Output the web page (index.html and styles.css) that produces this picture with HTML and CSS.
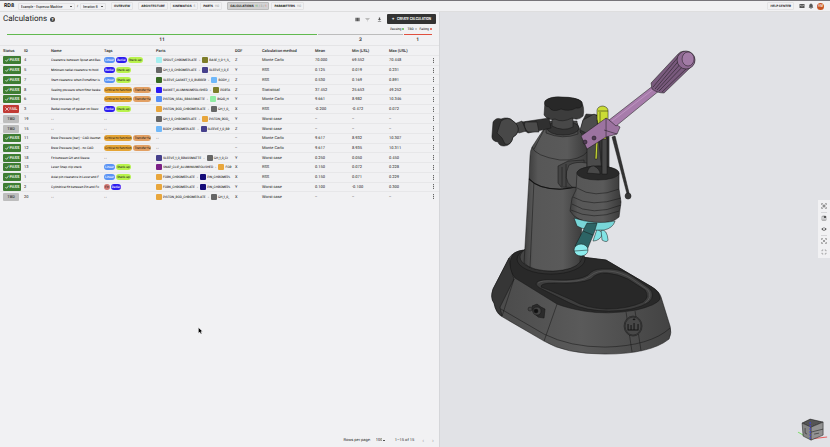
FILE: index.html
```html
<!DOCTYPE html>
<html lang="en">
<head>
  <meta charset="UTF-8">
  <meta name="viewport" content="width=device-width, initial-scale=1.0">
  <title>Calculations - Espresso Machine</title>
  <link rel="stylesheet" href="styles.css">
</head>
<body>
  <header class="topbar">
    <a href="#" class="logo">RD8</a>
    <select class="select project" aria-label="Project"><option>Example - Espresso Machine</option></select>
    <span class="slash">/</span>
    <select class="select iteration" aria-label="Iteration"><option>Iteration 6</option></select>
    <nav class="nav">
      <a href="#" class="first">OVERVIEW</a>
      <a href="#" class="first">ARCHITECTURE</a>
      <a href="#">KINEMATICS <small>5</small></a>
      <a href="#">PARTS <small>110</small></a>
      <a href="#" class="first active">CALCULATIONS <small><i class="ok">11</i> / <i>3</i> / <i class="bad">1</i></small></a>
      <a href="#">PARAMETERS <small>110</small></a>
    </nav>
    <div class="tools">
      <a href="#" class="help">HELP CENTER</a>
      <button class="icon" aria-label="Messages"><svg viewBox="0 0 24 24"><path d="M2 4h20v16H2zM4 7v2l8 5 8-5V7l-8 5z" fill-rule="evenodd"/></svg></button>
      <button class="icon" aria-label="Notifications"><svg viewBox="0 0 24 24"><path d="M12 23a3 3 0 0 0 3-3H9a3 3 0 0 0 3 3zm7-7v-5c0-4-2-6-5-7V2h-4v2c-3 1-5 3-5 7v5l-2 2v1h18v-1z"/></svg></button>
      <button class="avatar" aria-label="Account">AM</button>
    </div>
  </header>

  <main class="split">
    <section class="panel">
      <div class="heading">
        <h1>Calculations</h1>
        <button class="question" aria-label="Help">?</button>
        <div class="actions">
          <button class="icon" aria-label="Columns"><svg viewBox="0 0 24 24"><path d="M2 4h6v16H2zM9 4h6v16H9zM16 4h6v16h-6z"/></svg></button>
          <button class="icon light" aria-label="Filter"><svg viewBox="0 0 24 24"><path d="M2 5h20v3H2zM6 11h12v3H6zM10 17h4v3h-4z"/></svg></button>
          <button class="icon sep" aria-label="Download"><svg viewBox="0 0 24 24"><path d="M9 2h6v7h5l-8 8-8-8h5zM4 19h16v3H4z"/></svg></button>
          <button class="create"><b>+</b> CREATE CALCULATION</button>
        </div>
      </div>

      <div class="legend">
        <span class="pass">Passing</span><span class="tbd">TBD</span><span class="fail">Failing</span>
      </div>
      <div class="summary">
        <div class="pass">11</div>
        <div class="tbd">3</div>
        <div class="fail">1</div>
      </div>

      <table>
        <colgroup>
          <col class="c-status"><col class="c-id"><col class="c-name"><col class="c-tags"><col class="c-parts"><col class="c-id">
          <col class="c-method"><col class="c-num"><col class="c-num"><col><col class="c-menu">
        </colgroup>
        <thead>
          <tr><th>Status</th><th>ID</th><th>Name</th><th>Tags</th><th>Parts</th><th>DOF</th><th>Calculation method</th><th>Mean</th><th>Min (LSL)</th><th>Max (USL)</th><th></th></tr>
        </thead>
        <tbody id="rows"></tbody>
      </table>

      <footer class="pager">
        <label for="perPage">Rows per page:</label>
        <select id="perPage" class="select"><option>100</option></select>
        <span class="range">1–15 of 15</span>
        <button aria-label="Previous page">‹</button>
        <button aria-label="Next page">›</button>
      </footer>

      <svg class="cursor" viewBox="0 0 12 18"><path d="M1 1v14l3-3 3 5 2-1-2-5h4z"/></svg>
    </section>

    <section class="viewer">
      <svg class="scene" viewBox="440 12 390 435">
        <defs>
          <linearGradient id="body">
            <stop offset="0" stop-color="#3f3f3f"/><stop offset=".15" stop-color="#575757"/>
            <stop offset=".65" stop-color="#5a5a5a"/><stop offset="1" stop-color="#3a3a3a"/>
          </linearGradient>
          <linearGradient id="side">
            <stop offset="0" stop-color="#4a4a4a"/><stop offset=".5" stop-color="#5a5a5a"/><stop offset="1" stop-color="#434343"/>
          </linearGradient>
        </defs>

        <g class="line">
          <!-- base -->
          <path fill="url(#side)" d="M513 254Q518 250 526 250L606 260L652 287Q659 291 661 297L670 326Q672 333 669 339Q650 354 605 354Q565 354 544 341L501 316Q496 313 494 303Q490 298 493 289L509 258Q511 255 513 254Z"/>
          <path fill="#292929" d="M513 254Q518 250 526 250L606 260L652 287Q660 292 660 299Q657 305 636 310Q607 315 584 311Q567 308 557 304L515 278Q507 268 511 258Z"/>
          <path fill="#363636" d="M509 258Q510 270 514 279L500 307L502 316Q496 313 494 303Q490 298 493 289Z"/>
          <path fill="none" d="M557 304L544 341M501 309L544 334Q570 347 605 347Q650 346 670 328M626 312L632 352M635 311L641 351M514 279L502 316"/>
          <path fill="#3d3d3d" d="M536 284Q536 279 552 280Q579 281 588 275Q593 269 601 269H612Q623 270 632 276L649 288Q656 295 649 302Q635 311 609 311Q586 311 570 303L542 289Q537 287 536 284Z"/>
          <path fill="#282828" d="M541 287Q540 283 554 283Q580 284 591 279Q597 272 607 273Q618 274 628 279L645 290Q650 297 643 302Q628 309 606 309Q585 308 572 300L549 290Z"/>
          <path fill="none" stroke="#666" d="M538 283Q541 280 554 281Q582 283 590 276Q597 270 609 271Q622 272 632 279L648 290Q653 297 645 303"/>
          <ellipse cx="551" cy="259" rx="34" ry="15" fill="#303030"/>
          <ellipse cx="551" cy="257" rx="31" ry="14" fill="#454545"/>

          <!-- knob and badge on the base -->
          <path fill="#2b2b2b" d="M532 306l5-2 4 3 4 2-1 9-6-1-5-5z"/>
          <circle cx="537" cy="311" r="4" fill="#444"/><circle cx="536" cy="311" r="2" fill="#111"/><circle cx="530" cy="309" r="2" fill="#444"/>
          <ellipse cx="633" cy="326" rx="9" ry="10" fill="#484848"/>
          <ellipse cx="633" cy="326" rx="8" ry="9" fill="none"/>
          <path class="thick" fill="none" d="M628 324v6h10v-6M631 325v5M634 323v7M638 325v5M633 320q1-2 2 0"/>

          <!-- boiler column -->
          <path fill="url(#body)" d="M529 178L524 263Q532 271 553 271Q574 270 580 262L584 178Z"/>
          <path fill="none" d="M534 180L530 267"/>
          <path fill="url(#body)" d="M547 124L532 147Q530 151 530 156L529 178Q536 189 560 189Q584 187 588 176L588 148L577 123Z"/>
          <path class="thick" fill="none" d="M529 179Q540 190 563 189Q580 187 586 181"/>
          <path fill="none" d="M532 147Q535 156 560 160Q580 161 588 151M545 128L534 149"/>
          <path fill="#4a4a4a" d="M546 127Q544 122 551 121H577L578 134Q563 140 546 133Z"/>
          <ellipse cx="563" cy="128" rx="16" ry="7" fill="#343434"/>
          <path fill="#484848" d="M552 114V126Q563 132 573 127V114Z"/>
          <path fill="#3c3c3c" d="M545 101Q550 97 562 98Q576 97 581 101Q585 108 583 116Q578 121 572 118Q562 123 555 119Q548 121 544 115Z"/>
          <path fill="#282828" d="M545 101Q550 96 562 97Q576 97 582 102Q583 109 576 108Q569 112 561 109Q552 113 549 107Q543 106 545 101Z"/>

          <!-- steam knob -->
          <path fill="#303030" d="M522 122L549 118L551 128L528 133Q521 129 522 122Z"/>
          <path fill="#4b4b4b" d="M525 122h12l2 10h-11q-5-5-3-10z"/>
          <path fill="#444" d="M514 124l8-3 4 10-7 2-5-3z"/>
          <path fill="#303030" d="M493 122Q496 117 501 119Q508 116 513 121Q519 125 518 131Q517 135 513 137Q511 146 504 146Q499 146 498 142Q491 141 492 135Z"/>
          <path fill="#484848" d="M501 121Q508 116 513 121Q519 125 518 131Q517 135 513 137Q511 146 505 144L502 138L497 133Z"/>

          <!-- side pipe -->
          <path fill="#333" d="M583 120L586 114L598 115L603 141L593 146L580 132Z"/>
          <path fill="#4c4c4c" d="M583 120L594 114L604 120L597 138L580 130Z"/>
          <path fill="#444" d="M558 166L568 161L584 160V188L561 187L558 183Z"/>
          <path fill="#545454" d="M569 165Q576 161 587 163V188L572 187Q562 179 569 165Z"/>
          <path fill="none" d="M562 167v19M566 164v23"/>

          <!-- piston housing -->
          <path fill="#4b4b4b" d="M587 139L607 134V173H587Z"/>
          <path fill="#353535" d="M597 120L609 137V174H602Z"/>
          <path fill="#5c5c5c" d="M603 137H607V175H601Z"/>
          <path fill="#333" d="M612 137L615 136L629 193L627 194Z"/>
          <circle cx="628" cy="196" r="3" fill="#383838"/>
          <path fill="url(#body)" d="M577 172Q582 166 599 166Q614 166 619 173L619 189L621 202L619 217Q613 223 598 223Q576 222 570 211L572 198L576 190Z"/>
          <ellipse cx="598" cy="173" rx="21" ry="7" fill="#292929"/>
          <path fill="#484848" d="M587 173Q589 165 594 166Q600 169 600 174ZM602 138h5v36h-5z"/>
          <path fill="none" d="M577 188Q594 199 619 189M573 197Q591 208 621 198M572 204Q592 217 621 205M571 210Q593 221 619 211"/>

          <!-- portafilter -->
          <path fill="#83e4e5" d="M597 229L603 233Q600 241 593 241Z"/>
          <path fill="#83e4e5" d="M601 230Q607 229 608 240Q607 243 602 240Z"/>
          <path fill="#78d6d8" d="M574 218Q595 225 615 221Q613 228 604 230Q585 231 577 226Z"/>
          <path fill="#2d6465" d="M587 223L597 223L594 233L587 250L575 246Z"/>
          <ellipse cx="581" cy="250" rx="7" ry="6" fill="#8ceced"/>
          <path fill="none" d="M574 251L588 250M583 231l10 4"/>

          <!-- indicator -->
          <path fill="#cbdc36" d="M597 110Q598 106 603 106Q608 107 608 111V119L606 139H601L597 119Z"/>
          <path fill="#cbdc36" d="M596 139h2l-1 20h-2z"/>
          <path fill="none" d="M598 111h10M600 112v26"/>

          <!-- lever -->
          <path fill="#9c73a0" d="M581 136L606 118L620 127L617 134L606 137L587 149Z"/>
          <path fill="#a77cab" d="M609 120L654 85L660 90L616 126Z"/>
          <path fill="none" stroke="#d0abd3" d="M612 121L655 88"/>
          <path fill="#795a7d" d="M651 83L678 54Q682 49 691 53Q697 59 693 65L664 93Q657 93 652 89Z"/>
          <path fill="none" d="M653 87L679 56M655 89L681 58M657 90L683 61M659 91L686 63M662 92L690 65"/>
          <ellipse cx="686" cy="60" rx="9" ry="9" fill="#8e6992"/>
          <ellipse cx="688" cy="59" rx="6" ry="7" fill="#a27ba6"/>
          <circle cx="585" cy="142" r="2" fill="#503c54"/><circle cx="594" cy="138" r="2" fill="#503c54"/>
          <path fill="none" d="M606 118L606 137M604 130L617 134"/>
        </g>

        <!-- orientation cube -->
        <path stroke="#7bdc65" d="M798 432l12 7"/><path stroke="#e46060" d="M810 439l17-2"/>
        <g class="line">
          <path fill="#555" d="M802 423l8-4 13 3-12 5z"/>
          <path fill="#858585" d="M802 423l9 4v13l-8-4z"/>
          <path fill="#929292" d="M811 427l12-5v13l-12 5z"/>
          <path fill="none" d="M805 428v5l2 1M811 432l12-3M814 434l5-1"/>
        </g>
        <path stroke="#4040e0" stroke-dasharray="2 1" d="M810 422v17"/>
      </svg>

      <div class="view-tools">
        <button class="icon" aria-label="Fit all"><svg viewBox="0 0 24 24"><path class="stroke" d="M2 8V2h6M16 2h6v6M22 16v6h-6M8 22H2v-6M6 6l12 12M18 6L6 18M8 8h8v8H8z"/></svg></button>
        <button class="icon line-above" aria-label="Section"><svg viewBox="0 0 24 24"><path class="stroke" d="M4 5h16v16H4zM12 2v20"/><path d="M12 4h8v8h-8z"/></svg></button>
        <button class="icon" aria-label="Visibility"><svg viewBox="0 0 24 24"><path fill-rule="evenodd" d="M1 12Q12-1 23 12 12 25 1 12zm11-4a4 4 0 1 0 0 8 4 4 0 0 0 0-8z"/></svg></button>
        <button class="icon line-above" aria-label="Focus"><svg viewBox="0 0 24 24"><path class="stroke" d="M2 8V2h6M16 2h6v6M22 16v6h-6M8 22H2v-6M6 6l4 4M18 6l-4 4M6 18l4-4M18 18l-4-4"/><circle cx="12" cy="12" r="3"/></svg></button>
        <button class="icon" aria-label="Full screen"><svg viewBox="0 0 24 24"><path class="stroke" d="M4 9V4h5M15 4h5v5M20 15v5h-5M9 20H4v-5"/></svg></button>
      </div>
    </section>
  </main>

  <script>
    const tagClass = {
      'Linear': 'linear', 'Radial': 'radial', 'Stack-up': 'stack',
      'Critical to function': 'critical', 'Transfer fu': 'transfer', 'Fit': 'fit'
    };

    // status, id, name, tags, parts, dof, method, mean, min, max
    const data = [
      ['PASS', 4, 'Clearance between Spout and Bas', ['Linear', 'Radial', 'Stack-up'], [['#a5eff0', 'SPOUT_CHROMEPLATE'], ['#7d7d29', 'BASE_1_0-1_S_']], 'Z', 'Monte Carlo', '70.000', '69.552', '70.448'],
      ['PASS', 5, 'Minimum radial clearance to hold', ['Radial', 'Stack-up'], [['#666666', 'GH_1_0_CHROMEPLATE'], ['#46408c', 'SLEEVE_1_0_E']], 'Y', 'RSS', '0.125', '0.019', '0.231'],
      ['PASS', 7, 'Start clearance when Portafilter is', ['Linear', 'Stack-up'], [['#376a23', 'SLEEVE_GASKET_1_0_RUBBER'], ['#70b8fa', 'BODY_(']], 'Z', 'RSS', '0.530', '0.169', '0.891'],
      ['PASS', 8, 'Sealing pressure when filter baske', ['Critical to function', 'Transfer fu'], [['#2a18f5', 'BASKET_ALUMINUMPOLISHED'], ['#7d7d29', 'PORTA']], 'Z', 'Statistical', '37.452', '25.653', '49.252'],
      ['PASS', 6, 'Brew pressure [bar]', ['Critical to function', 'Transfer fu'], [['#568ff7', 'PISTON_SEAL_BRASSMATTE'], ['#91eda4', 'RIGID_H']], 'Y', 'Monte Carlo', '9.661', '8.982', '10.346'],
      ['FAIL', 3, 'Radial overlap of gasket on Sleev', ['Radial', 'Stack-up'], [['#e8a63c', 'PISTON_ROD_CHROMEPLATE'], ['#666666', 'GH_1_0_']], 'X', 'RSS', '-0.200', '-0.472', '0.072'],
      ['TBD', 19, '--', [], [['#666666', 'GH_1_0_CHROMEPLATE'], ['#e8a63c', 'PISTON_ROD_']], 'Y', 'Worst case', '--', '--', '--'],
      ['TBD', 15, '--', [], [['#70b8fa', 'BODY_CHROMEPLATE'], ['#46408c', 'SLEEVE_1_0_BR']], 'Z', 'Worst case', '--', '--', '--'],
      ['PASS', 11, 'Brew Pressure [bar] - CAD illustrat', ['Critical to function', 'Transfer fu'], [], '--', 'Monte Carlo', '9.617', '8.932', '10.307'],
      ['PASS', 12, 'Brew Pressure [bar] - no CAD', ['Critical to function', 'Transfer fu'], [], '--', 'Monte Carlo', '9.617', '8.935', '10.311'],
      ['PASS', 18, 'Fit between GH and Sleeve', [], [['#46408c', 'SLEEVE_1_0_BRASSMATTE'], ['#666666', 'GH_1_0_CI']], 'Y', 'Worst case', '0.250', '0.050', '0.450'],
      ['PASS', 13, 'Lever Snap clip stack', ['Linear', 'Stack-up'], [['#7b2087', 'SNAP_CLIP_ALUMINIUMPOLISHED'], ['#e8a63c', 'FOR']], 'X', 'RSS', '0.150', '0.072', '0.228'],
      ['PASS', 1, 'Axial pin clearance in Lever and F', ['Linear', 'Stack-up'], [['#e8a63c', 'FORK_CHROMEPLATE'], ['#150c78', 'PIN_CHROMEPL']], 'X', 'RSS', '0.150', '0.071', '0.229'],
      ['PASS', 2, 'Cylindrical fit between Pin and Fo', ['Fit', 'Radial'], [['#e8a63c', 'FORK_CHROMEPLATE'], ['#150c78', 'PIN_CHROMEPL']], 'Y', 'Worst case', '0.100', '-0.100', '0.300'],
      ['TBD', 20, '--', [], [['#e8a63c', 'PISTON_ROD_CHROMEPLATE'], ['#666666', 'GH_1_0_']], 'X', 'Worst case', '--', '--', '--']
    ];

    const marks = {
      PASS: '<svg viewBox="0 0 12 12"><path d="M1 6l4 4 6-8"/></svg>',
      FAIL: '<svg viewBox="0 0 12 12"><path d="M1 1l10 10M11 1L1 11"/></svg>',
      TBD: ''
    };

    document.getElementById('rows').innerHTML = data.map(([status, id, name, tags, parts, ...rest]) => {
      const chips = tags.map(t => `<span class="tag ${tagClass[t]}">${t}</span>`).join('') || '--';
      const list = parts.map(([color, part]) => `<i style="background:${color}"></i>${part}`).join('<em>-</em>') || '--';
      return `<tr>
        <td><span class="status ${status.toLowerCase()}">${marks[status]}${status}</span></td>
        <td>${id}</td><td><div class="clip">${name}</div></td>
        <td><div class="clip tags">${chips}</div></td>
        <td><div class="clip parts">${list}</div></td>
        ${rest.map(v => `<td>${v}</td>`).join('')}
        <td><button class="more" aria-label="More"></button></td>
      </tr>`;
    }).join('');
  </script>
</body>
</html>
```
FILE: styles.css
```css
* {
  box-sizing: border-box;
}

body {
  margin: 0;
  min-height: 100vh;
  display: flex;
  flex-direction: column;
  background: #f1f1f3;
  border-top: 1px solid #77757a;
  color: #222;
  font-family: Roboto, sans-serif;
  font-size: 4px;
  line-height: 6px;
  text-rendering: geometricPrecision;
}

a {
  color: inherit;
  text-decoration: none;
}

button,
select {
  font: inherit;
  color: inherit;
  margin: 0;
  padding: 0;
  border: 0;
  background: none;
}

i,
em {
  font-style: normal;
}

svg {
  display: block;
}

.icon {
  width: 6px;
  height: 6px;
}

.icon svg {
  width: 100%;
  fill: #555;
}

.icon .stroke {
  fill: none;
  stroke: #666;
  stroke-width: 2;
}

/* small print */
.topbar,
.create,
.legend,
.clip {
  font-family: Inter, sans-serif;
  font-size: 3px;
  font-weight: 500;
  color: #111;
}

/* top bar */
.topbar {
  display: flex;
  align-items: center;
  height: 11px;
  padding: 0 6px 0 4px;
  border-bottom: 1px solid #dededf;
}

.logo {
  width: 14px;
  font-size: 5px;
  font-weight: bold;
}

.select {
  appearance: none;
  height: 7px;
  padding: 0 5px 0 2px;
  border-radius: 1px;
  background: linear-gradient(#555, #555) no-repeat right 2px center / 2px 1px;
}

.project,
.iteration {
  border: 1px solid #e2e2e4;
}

.project {
  width: 57px;
}

.iteration {
  width: 26px;
}

.slash {
  width: 5px;
  text-align: center;
}

.nav {
  display: flex;
  gap: 2px;
  margin-left: 2px;
}

.nav a,
.help {
  height: 8px;
  padding: 0 2px;
  border: 1px solid #e3e3e5;
  border-radius: 1px;
  font-weight: bold;
  white-space: nowrap;
}

.nav .first {
  margin-left: 3px;
}

.nav .active {
  background: #d2d2d3;
  border-color: #bbb;
}

.nav small {
  margin-left: 1px;
  font-size: 3px;
  font-weight: normal;
  color: #888;
}

.nav .ok {
  color: #3fa52c;
}

.nav .bad {
  color: #e0503f;
}

.tools {
  display: flex;
  align-items: center;
  gap: 3px;
  margin-left: auto;
}

.help {
  margin-right: 2px;
}

.avatar {
  width: 7px;
  height: 7px;
  border-radius: 50%;
  background: #c85523;
  color: #fff;
  text-align: center;
}

/* two panes */
.split {
  flex: 1;
  display: grid;
  grid-template-columns: 53fr 47fr;
}

.panel {
  position: relative;
  display: flex;
  flex-direction: column;
  min-width: 0;
  border-right: 1px solid #d5d6d9;
}

.heading {
  display: flex;
  align-items: center;
  height: 14px;
  padding: 0 3px;
}

h1 {
  margin: 0;
  font-size: 8px;
  line-height: 10px;
  font-weight: normal;
}

.question {
  width: 5px;
  height: 5px;
  margin-left: 3px;
  border-radius: 50%;
  background: #444;
  color: #fff;
  line-height: 5px;
  font-weight: bold;
}

.actions {
  display: flex;
  align-items: center;
  gap: 5px;
  margin-left: auto;
}

.actions .icon {
  width: 5px;
  height: 5px;
}

.actions .light svg {
  fill: #aaa;
}

.actions .sep {
  margin-left: 2px;
}

.create {
  width: 49px;
  height: 10px;
  border-radius: 1px;
  background: #333;
  color: #fff;
  font-weight: bold;
  white-space: nowrap;
}

.create b {
  margin-right: 2px;
  font-size: 4px;
}

.legend {
  display: flex;
  justify-content: flex-end;
  gap: 3px;
  height: 7px;
  padding-right: 7px;
}

.legend span::after {
  content: "";
  display: inline-block;
  width: 2px;
  height: 2px;
  margin-left: 1px;
  border-radius: 50%;
  background: #bbb;
}

.legend .pass::after {
  background: #61b94f;
}

.legend .fail::after {
  background: #e0503f;
}

.summary {
  display: grid;
  grid-template-columns: 11fr 3fr 1fr;
  gap: 1px;
  padding: 1px 7px 0;
  font-size: 5px;
  line-height: 10px;
  font-weight: 500;
  text-align: center;
}

.summary div {
  border-top: 1px solid #bcbcbc;
}

.summary .pass {
  border-color: #61b94f;
}

.summary .fail {
  border-color: #e0503f;
}

/* table */
table {
  width: 100%;
  height: 156px;
  table-layout: fixed;
  border-collapse: collapse;
  border-top: 1px solid #e4e4e6;
}

.c-status { width: 24px; }
.c-id { width: 27px; }
.c-name { width: 53px; }
.c-tags { width: 52px; }
.c-parts { width: 79px; }
.c-method { width: 53px; }
.c-num { width: 37px; }
.c-menu { width: 8px; }

th,
td {
  padding: 0;
  text-align: left;
  white-space: nowrap;
}

th {
  height: 10px;
  font-weight: 500;
}

th:first-child,
td:first-child {
  padding-left: 3px;
}

tbody tr {
  border-top: 1px solid #e7e7e9;
}

.clip {
  width: calc(100% - 1px);
  overflow: hidden;
}

.status {
  display: flex;
  align-items: center;
  justify-content: center;
  gap: 1px;
  width: 18px;
  height: 8px;
  border-radius: 1px;
  background: #3f7d33;
  color: #fff;
  font-weight: 500;
}

.status.fail {
  width: 16px;
  background: #c13a35;
}

.status.tbd {
  width: 16px;
  background: #bdbdbd;
  color: #444;
}

.status svg {
  width: 4px;
  fill: none;
  stroke: #fff;
  stroke-width: 2;
}

.tags {
  display: flex;
  gap: 1px;
}

.tag {
  flex: none;
  padding: 0 1px;
  border-radius: 3px;
  background: #5a93f5;
  color: #fff;
}

.tag.radial { background: #2d1df0; }
.tag.stack { background: #b9f24d; color: #222; }
.tag.critical { background: #e5a536; color: #222; }
.tag.transfer { background: #e2a064; color: #222; }
.tag.fit { background: #d27874; color: #222; }

.parts {
  display: flex;
  align-items: center;
}

.parts i {
  flex: none;
  width: 6px;
  height: 6px;
  margin-right: 1px;
  border-radius: 1px;
}

.parts em {
  margin: 0 2px;
}

.more {
  display: block;
  width: 1px;
  height: 5px;
  margin-left: 2px;
  background: repeating-linear-gradient(#666 0 1px, #ccc 1px 2px);
}

/* pager */
.pager {
  display: flex;
  align-items: center;
  justify-content: flex-end;
  height: 14px;
  margin-top: auto;
  padding-right: 5px;
}

.pager .select {
  width: 13px;
  margin: 0 8px 0 3px;
}

.pager button {
  margin-left: 8px;
  color: #999;
  font-size: 6px;
}

.cursor {
  position: absolute;
  left: 45%;
  top: 315px;
  width: 5px;
  stroke: #fff;
}

/* 3D view */
.viewer {
  position: relative;
  min-width: 0;
  background: #e1e2e6;
}

.scene {
  width: 100%;
}

.line {
  stroke: #141414;
  stroke-width: .5;
  stroke-linejoin: round;
}

.thick {
  stroke-width: 1;
}

.view-tools {
  position: absolute;
  right: 0;
  top: 188px;
  display: flex;
  flex-direction: column;
  align-items: center;
  gap: 5px;
  width: 12px;
  padding: 3px 0;
  background: #f1f1f3;
}

.view-tools .line-above {
  position: relative;
  margin-top: 1px;
}

.view-tools .line-above::before {
  content: "";
  position: absolute;
  left: 0;
  top: -3px;
  width: 6px;
  border-top: 1px solid #d5d5d8;
}
```
